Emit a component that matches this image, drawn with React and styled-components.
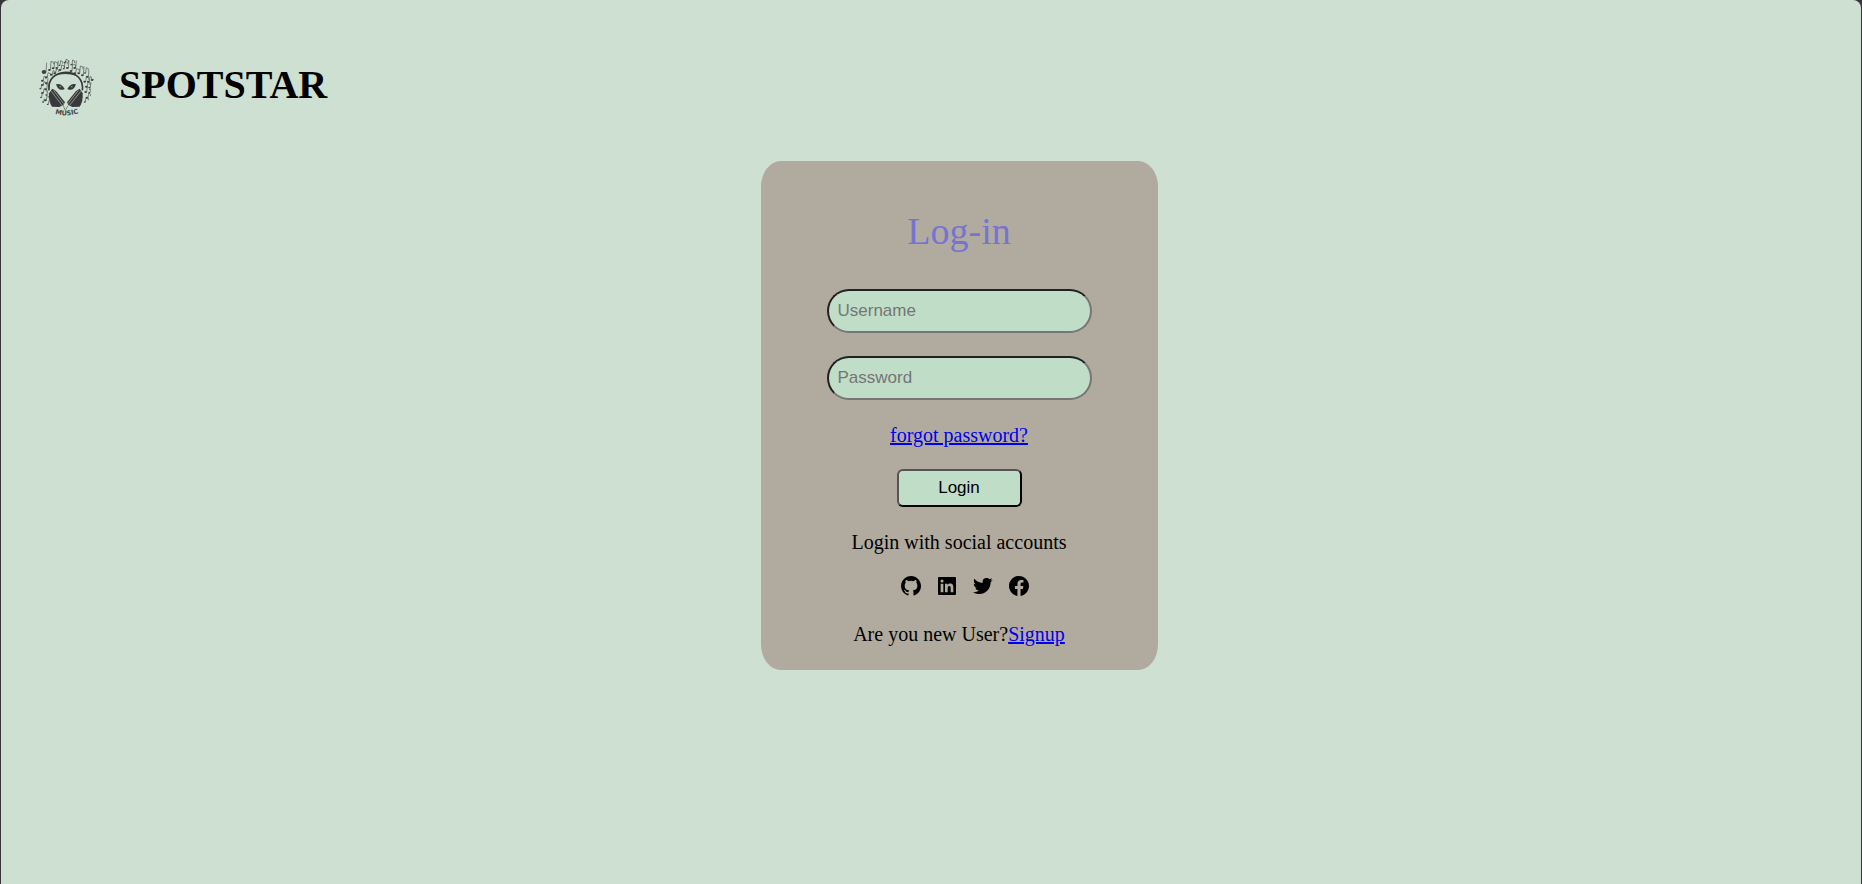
import React from "react";
import styled, { createGlobalStyle } from "styled-components";
import {
  BiLogoGithub,
  BiLogoLinkedinSquare,
  BiLogoTwitter,
  BiLogoFacebookCircle,
} from "react-icons/bi";

const GlobalStyle = createGlobalStyle`
  *, *::before, *::after { box-sizing: border-box; }
  html { background: #37353a; }
  body {
    margin: 0;
    font-family: "Liberation Serif", "Times New Roman", serif;
    font-size: 20px;
    line-height: 24px;
    color: #000;
  }
`;

const Page = styled.div`
  min-height: 100vh;
  margin: 0 1px;
  background: #cee0d2;
  border-radius: 8px 8px 0 0;
`;

const Header = styled.header`
  display: flex;
  align-items: center;
  gap: 14px;
  padding: 48px 29px 38px;
`;

const Brand = styled.h1`
  margin: 0;
  font-size: 40px;
  line-height: 48px;
  font-weight: bold;
  padding-bottom: 2px;
`;

const Main = styled.main`
  display: flex;
  justify-content: center;
  padding: 0 0 40px 56px;
`;

const Card = styled.form`
  display: flex;
  flex-direction: column;
  align-items: center;
  width: 100%;
  max-width: 397px;
  padding: 47px 24px 24px;
  background: #b0ab9e;
  border-radius: 5%;
`;

const Title = styled.h2`
  margin: 0 0 34px;
  font-size: 38px;
  line-height: 47px;
  font-weight: normal;
  color: #7673d3;
`;

const Field = styled.input`
  width: 265px;
  max-width: 100%;
  height: 44px;
  margin-bottom: 23px;
  padding: 0 9px;
  border: 2px inset #767676;
  border-radius: 22px;
  background: #c0ddc8;
  font: 17px "Liberation Sans", Arial, sans-serif;

  &::placeholder {
    color: #757575;
    opacity: 1;
  }
`;

const TextLink = styled.a`
  color: #0000ee;
  text-decoration: underline;
`;

const LoginButton = styled.button`
  width: 125px;
  height: 38px;
  margin: 22px 0 23px;
  padding: 0;
  border: 2px outset #000;
  border-radius: 6px;
  background: #c0ddc8;
  color: #000;
  font: 17px "Liberation Sans", Arial, sans-serif;
`;

const Line = styled.p`
  margin: 0;
`;

const SocialList = styled.nav`
  display: flex;
  gap: 12px;
  margin: 20px 0 24px;
  padding-left: 12px;
`;

const SocialLink = styled.a`
  display: flex;
  color: #000;
  font-size: 24px;
`;

const LogoDrawing = styled.svg`
  flex: none;
  width: 75px;
  height: 75px;
`;

// x, y of the note head, stem height, flag direction (0 for none), head radius
const NOTES = [
  [42, 72, 28, 0, 7], [58, 66, 26, 8, 4], [69, 61, 20, 8, 4], [80, 60, 22, 0, 4],
  [90, 66, 15, 8, 4], [101, 62, 22, 7, 3], [112, 60, 22, 0, 4], [123, 69, 21, 9, 4],
  [134, 60, 22, 0, 4], [134, 76, 14, 9, 4], [146, 76, 22, 8, 4], [157, 82, 27, 0, 4],
  [165, 75, 16, 6, 3], [172, 86, 18, 0, 4], [186, 96, 3, 0, 4], [175, 101, 16, 5, 4],
  [164, 101, 15, 7, 4], [169, 116, 14, 6, 4], [179, 118, 16, 0, 3], [167, 132, 15, 7, 4],
  [178, 134, 12, 0, 3], [171, 149, 14, 5, 4], [164, 162, 14, 7, 3], [49, 88, 14, 8, 4],
  [37, 98, 13, 6, 4], [49, 106, 15, 0, 4], [37, 111, 10, 8, 4], [31, 122, 12, 0, 3],
  [47, 124, 14, 6, 4], [37, 135, 13, 7, 4], [49, 141, 14, 0, 3], [33, 148, 12, 0, 3],
  [46, 157, 14, 6, 4], [39, 162, 10, 0, 3], [53, 169, 12, 0, 3], [74, 76, 13, 7, 4],
  [64, 80, 12, 7, 4], [88, 52, 14, 6, 3], [124, 50, 14, 6, 3], [104, 44, 10, 7, 3],
];

function Logo() {
  return (
    <LogoDrawing viewBox="0 0 225 225" role="img" aria-label="Alien wearing headphones">
      <g fill="none" stroke="#4c504e" strokeWidth="2">
        {NOTES.map(([x, y, h, flag, r]) => (
          <g key={`${x}-${y}`}>
            <ellipse cx={x} cy={y} rx={r} ry={r - 1} fill="#3d3f40" stroke="none" />
            <path d={`M${x + r - 1} ${y}l2 ${-h}${flag ? `l${flag} 3v6` : ""}`} />
          </g>
        ))}
      </g>
      <path
        d="M57 127C53 93 76 74 107 73C139 73 161 94 157 127"
        fill="none"
        stroke="#39393b"
        strokeWidth="5"
      />
      <path d="M73 83Q107 62 141 84Q107 73 73 83Z" fill="#39393b" />
      <path d="M78 109Q94 105 104 123Q86 132 78 109Z" fill="#39393b" />
      <path d="M138 109Q122 105 112 123Q130 132 138 109Z" fill="#39393b" />
      <ellipse cx="91" cy="116" rx="3" ry="2" fill="#8b9690" />
      <ellipse cx="125" cy="116" rx="3" ry="2" fill="#8b9690" />
      <g fill="#39393b">
        <path d="M57 136L67 122L78 129L105 163L100 171L88 177L66 176Q55 160 57 136Z" />
        <path d="M158 136L149 122L138 129L111 163L115 171L127 177L149 176Q160 160 158 136Z" />
      </g>
      <path d="M99 171L106 187L114 173" fill="none" stroke="#59605c" strokeWidth="2" />
      <g fill="none" stroke="#b3c0b7" strokeWidth="2">
        <path d="M64 130L96 172M71 127L101 167" />
        <path d="M152 130L119 172M145 127L114 167" />
      </g>
      <path id="music-arc" d="M65 193Q108 212 156 191" fill="none" />
      <text
        fill="#454947"
        fontFamily="DejaVu Sans, sans-serif"
        fontSize="20"
        fontWeight="bold"
      >
        <textPath href="#music-arc" startOffset="50%" textAnchor="middle">MUSIC</textPath>
      </text>
    </LogoDrawing>
  );
}

const SOCIALS = [
  ["GitHub", BiLogoGithub],
  ["LinkedIn", BiLogoLinkedinSquare],
  ["Twitter", BiLogoTwitter],
  ["Facebook", BiLogoFacebookCircle],
];

export default function App() {
  return (
    <>
      <GlobalStyle />
      <Page>
        <Header>
          <Logo />
          <Brand>SPOTSTAR</Brand>
        </Header>
        <Main>
          <Card onSubmit={(event) => event.preventDefault()}>
            <Title>Log-in</Title>
            <Field type="text" placeholder="Username" aria-label="Username" />
            <Field type="password" placeholder="Password" aria-label="Password" />
            <TextLink href="#forgot">forgot password?</TextLink>
            <LoginButton type="submit">Login</LoginButton>
            <Line>Login with social accounts</Line>
            <SocialList aria-label="Social accounts">
              {SOCIALS.map(([name, Icon]) => (
                <SocialLink key={name} href={`#${name.toLowerCase()}`} aria-label={name}>
                  <Icon />
                </SocialLink>
              ))}
            </SocialList>
            <Line>
              Are you new User?<TextLink href="#signup">Signup</TextLink>
            </Line>
          </Card>
        </Main>
      </Page>
    </>
  );
}
